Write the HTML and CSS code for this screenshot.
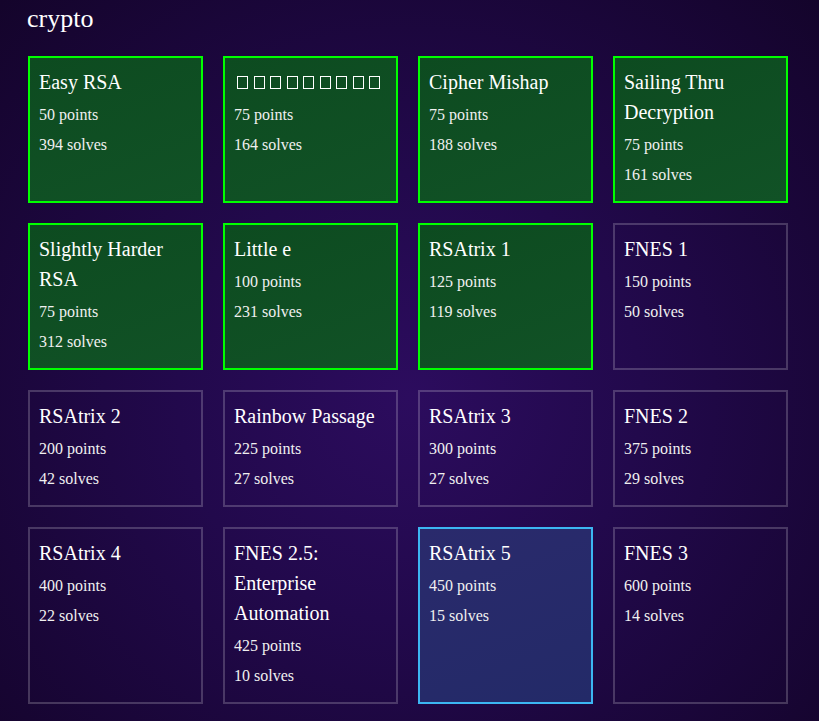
FILE: index.html
```html
<!DOCTYPE html>
<html>
<head>
<meta charset="utf-8">
<link rel="stylesheet" href="styles.css">
</head>
<body>
<h1 class="category">crypto</h1>
<div class="grid">
  <div class="card solved"><div class="name">Easy RSA</div><div class="meta">50 points</div><div class="meta">394 solves</div></div>
  <div class="card solved"><div class="name tofu" aria-label="unrenderable title"><span class="box"></span><span class="box"></span><span class="box"></span><span class="box"></span><span class="box"></span><span class="box"></span><span class="box"></span><span class="box"></span><span class="box"></span></div><div class="meta">75 points</div><div class="meta">164 solves</div></div>
  <div class="card solved"><div class="name">Cipher Mishap</div><div class="meta">75 points</div><div class="meta">188 solves</div></div>
  <div class="card solved"><div class="name">Sailing Thru Decryption</div><div class="meta">75 points</div><div class="meta">161 solves</div></div>

  <div class="card solved"><div class="name">Slightly Harder RSA</div><div class="meta">75 points</div><div class="meta">312 solves</div></div>
  <div class="card solved"><div class="name">Little e</div><div class="meta">100 points</div><div class="meta">231 solves</div></div>
  <div class="card solved"><div class="name">RSAtrix 1</div><div class="meta">125 points</div><div class="meta">119 solves</div></div>
  <div class="card"><div class="name">FNES 1</div><div class="meta">150 points</div><div class="meta">50 solves</div></div>

  <div class="card"><div class="name">RSAtrix 2</div><div class="meta">200 points</div><div class="meta">42 solves</div></div>
  <div class="card"><div class="name">Rainbow Passage</div><div class="meta">225 points</div><div class="meta">27 solves</div></div>
  <div class="card"><div class="name">RSAtrix 3</div><div class="meta">300 points</div><div class="meta">27 solves</div></div>
  <div class="card"><div class="name">FNES 2</div><div class="meta">375 points</div><div class="meta">29 solves</div></div>

  <div class="card"><div class="name">RSAtrix 4</div><div class="meta">400 points</div><div class="meta">22 solves</div></div>
  <div class="card"><div class="name">FNES 2.5: Enterprise Automation</div><div class="meta">425 points</div><div class="meta">10 solves</div></div>
  <div class="card active"><div class="name">RSAtrix 5</div><div class="meta">450 points</div><div class="meta">15 solves</div></div>
  <div class="card"><div class="name">FNES 3</div><div class="meta">600 points</div><div class="meta">14 solves</div></div>
</div>
</body>
</html>
```

FILE: styles.css
```css
html {
  height: 100%;
}
body {
  margin: 0;
  min-height: 100%;
  padding: 0 31px 20px 28px;
  box-sizing: border-box;
  font-family: "Liberation Serif", "Times New Roman", serif;
  color: #ffffff;
  background: radial-gradient(ellipse at 50% 55%, #2c0c5e 0%, #22094c 40%, #14042b 100%);
  background-color: #14042b;
}
.category {
  margin: 0 0 0 -1px;
  padding-top: 4px;
  height: 56px;
  box-sizing: border-box;
  font-size: 26px;
  font-weight: normal;
  line-height: 30px;
}
.grid {
  display: grid;
  grid-template-columns: repeat(4, 175px);
  column-gap: 20px;
  row-gap: 20px;
}
.card {
  border: 2px solid rgba(255, 255, 255, 0.2);
  padding: 9px 9px 11px 9px;
  box-sizing: border-box;
}
.card.solved {
  border-color: #00ff00;
  background: linear-gradient(160deg, #0d4b20 0%, #115226 100%);
}
.card.active {
  border-color: #3cb6f2;
  background: linear-gradient(160deg, #2a2a6c 0%, #232a68 100%);
}
.name {
  font-size: 20px;
  line-height: 30px;
}
.tofu {
  display: flex;
  align-items: center;
  gap: 5.5px;
  height: 30px;
  padding-left: 3px;
}
.box {
  display: block;
  width: 11px;
  height: 13px;
  border: 1px solid #ffffff;
  box-sizing: border-box;
  margin-top: 1px;
}
.meta {
  font-size: 16px;
  line-height: 30px;
  color: #f0f0f0;
}
.name + .meta {
  margin-top: 3px;
}
```
